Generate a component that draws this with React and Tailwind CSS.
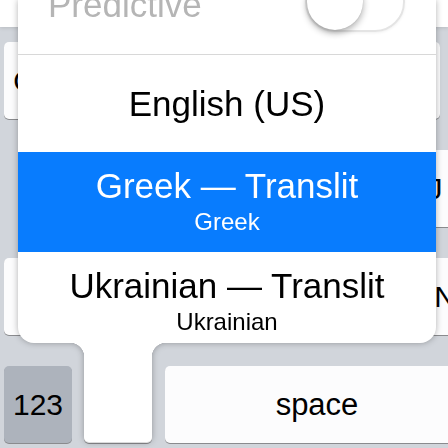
function Key({ tone = 'bg-[#fcfcfd]', className = '', children }) {
  return (
    <div
      className={`h-full shrink-0 rounded-[5px] ${tone} shadow-[0_1px_0_#8a8b8e] flex items-center justify-center text-[30px] leading-none text-black ${className}`}
    >
      {children}
    </div>
  )
}

export default function App() {
  return (
    <div className="w-[448px] h-[448px] bg-[#d1d5db]">
      <div className="relative w-[448px] h-[448px] overflow-hidden font-['Liberation_Sans',Arial,sans-serif]">

        {/* Keyboard behind the popup */}
        <div className="h-[27px] bg-white shadow-[0_1px_4px_rgba(0,0,0,0.12)]" />
        <div className="flex flex-col gap-[31px] pt-[15px]">
          <div className="flex h-[77px] justify-between pl-[4px] pr-[8px]">
            <Key className="w-[42px]">Q</Key>
            <Key className="w-[42px]">P</Key>
          </div>
          <div className="flex h-[77px] justify-end">
            <Key className="w-[50px] -mr-[12px]">J</Key>
          </div>
          <div className="flex h-[77px] justify-between pl-[4px]">
            <Key className="w-[56px]" />
            <Key className="w-[50px] -mr-[22px]">N</Key>
          </div>
          <div className="flex h-[77px] pl-[4px]">
            <Key tone="bg-[#adb3bc]" className="w-[68px]">123</Key>
            <Key className="w-[68px] ml-[12px]" />
            <Key className="w-[304px] ml-[13px] text-[31px]">space</Key>
          </div>
        </div>

        {/* Language popup */}
        <div className="absolute left-[18px] top-0 w-[418px] drop-shadow-[0_0_3px_rgba(0,0,0,0.3)]">
          <div className="h-[343px] overflow-hidden rounded-b-[16px] bg-white">
            <div className="-mt-[45px] flex h-[100px] items-center justify-between border-b border-[#d8d8d8] pl-[30px] pr-[31px]">
              <span className="text-[35px] leading-none text-[#b5b5b5]">Predictive</span>
              <div className="-mt-[6px] w-[100px] h-[60px] rounded-full border-2 border-[#e4e4e4] shadow-[0_1px_3px_rgba(0,0,0,0.06)]">
                <div className="w-[56px] h-[56px] rounded-full bg-white shadow-[0_3px_7px_rgba(0,0,0,0.32),0_0_1px_rgba(0,0,0,0.2)]" />
              </div>
            </div>

            <div className="flex h-[97px] items-center justify-center text-[35px] leading-none text-black">
              English (US)
            </div>

            <div className="flex h-[100px] flex-col items-center bg-[#087cfe] pt-[16px] text-white">
              <span className="text-[35px] leading-[35px]">Greek — Translit</span>
              <span className="mt-[7px] text-[24px] leading-[24px]">Greek</span>
            </div>

            <div className="flex h-[91px] flex-col items-center pt-[16px] text-black">
              <span className="text-[35px] leading-[35px]">Ukrainian — Translit</span>
              <span className="mt-[7px] text-[24px] leading-[24px]">Ukrainian</span>
            </div>
          </div>

          <div className="flex pl-[52px]">
            <div className="w-[14px] h-[14px] bg-[radial-gradient(circle_at_0_100%,transparent_14px,#fff_14.5px)]" />
            <div className="w-[68px] h-[99px] rounded-b-[5px] bg-white" />
            <div className="w-[14px] h-[14px] bg-[radial-gradient(circle_at_100%_100%,transparent_14px,#fff_14.5px)]" />
          </div>
        </div>
      </div>
    </div>
  )
}
